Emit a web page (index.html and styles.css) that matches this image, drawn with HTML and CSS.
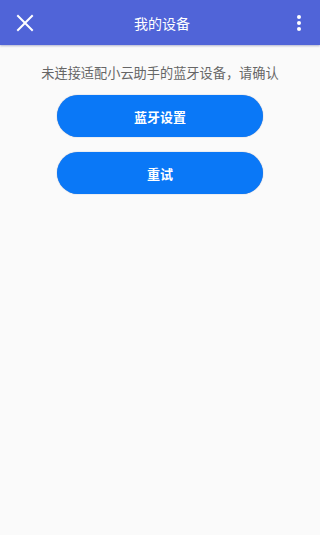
FILE: index.html
```html
<!DOCTYPE html>
<html lang="zh">
<head>
<meta charset="utf-8">
<title>我的设备</title>
<link rel="stylesheet" href="styles.css">
</head>
<body>
<header class="topbar">
  <button class="icon-btn" aria-label="关闭">
    <svg width="18" height="18" viewBox="0 0 18 18"><path d="M2 2L16 16M16 2L2 16" stroke="#fff" stroke-width="2" stroke-linecap="square"/></svg>
  </button>
  <h1 class="title">我的设备</h1>
  <button class="icon-btn" aria-label="更多">
    <svg width="6" height="18" viewBox="0 0 6 18"><circle cx="3" cy="3" r="2" fill="#fff"/><circle cx="3" cy="9" r="2" fill="#fff"/><circle cx="3" cy="15" r="2" fill="#fff"/></svg>
  </button>
</header>
<main class="content">
  <p class="message">未连接适配小云助手的蓝牙设备，请确认</p>
  <button class="pill">蓝牙设置</button>
  <button class="pill">重试</button>
</main>
</body>
</html>
```
FILE: styles.css
```css
html, body {
  margin: 0;
  padding: 0;
  background: #fafafa;
  font-family: "Noto Sans CJK SC", "Noto Sans", sans-serif;
  height: 100%;
}
.topbar {
  height: 45px;
  background: #5064d8;
  display: flex;
  align-items: center;
  justify-content: space-between;
  padding: 0 10px 0 14px;
  box-shadow: 0 1px 2px rgba(40, 50, 120, 0.35);
  position: relative;
}
.icon-btn {
  background: none;
  border: 0;
  padding: 0;
  width: 22px;
  height: 22px;
  display: flex;
  align-items: center;
  justify-content: center;
}
.title {
  margin: 0;
  color: #fff;
  font-size: 14px;
  font-weight: 400;
  line-height: 1;
}
.content {
  display: flex;
  flex-direction: column;
  align-items: center;
  padding-top: 15px;
}
.message {
  margin: 0 0 9px;
  font-size: 13.2px;
  line-height: 26px;
  color: #666;
}
.pill {
  width: 206px;
  height: 42px;
  border: 0;
  border-radius: 21px;
  background: #0a78f7;
  color: #fff;
  font-family: inherit;
  font-size: 13px;
  font-weight: 700;
  margin-bottom: 15px;
  box-shadow: 0 0 1px rgba(0, 40, 120, 0.6);
}
```
